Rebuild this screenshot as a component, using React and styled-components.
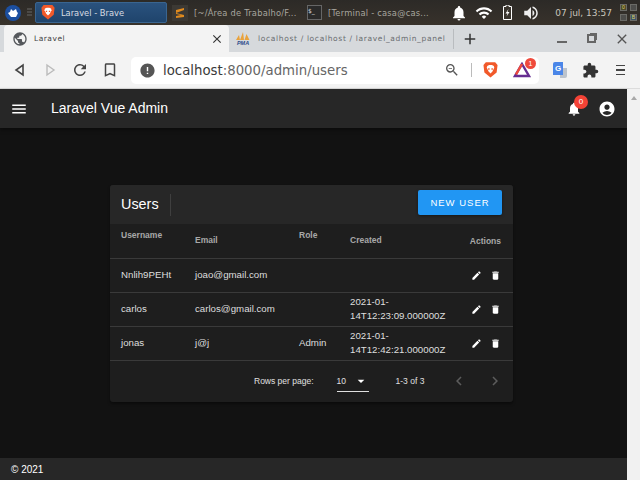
import React from 'react'
import styled, { createGlobalStyle } from 'styled-components'
import { MdMenu, MdNotifications, MdAccountCircle, MdEdit, MdDelete, MdChevronLeft, MdChevronRight, MdArrowDropDown, MdPublic, MdError, MdExtension, MdClose, MdAdd, MdBookmarkBorder, MdRefresh, MdWifi, MdVolumeUp, MdZoomOut } from 'react-icons/md'

const GlobalStyle = createGlobalStyle`
  html, body { margin: 0; padding: 0; height: 480px; overflow: hidden; background: #121212; }
  * { box-sizing: border-box; }
  body { font-family: "Liberation Sans", Arial, sans-serif; }
`

const users = [
  { name: 'Nnlih9PEHt', email: 'joao@gmail.com', role: '', created: '' },
  { name: 'carlos', email: 'carlos@gmail.com', role: '', created: '2021-01-14T12:23:09.000000Z' },
  { name: 'jonas', email: 'j@j', role: 'Admin', created: '2021-01-14T12:42:21.000000Z' },
]

const Lion = ({ size = 16 }) => (
  <svg width={size} height={size * 1.15} viewBox="0 0 16 18">
    <path d="M3 1h10l2.5 3-1 8-6.5 5.500-6.500-5.500-1-8z" fill="#f1592a" />
    <path d="M4.500 5l2-1h3l2 1 .5 2-2 4-2 2-2-2-2-4z" fill="#fff" />
    <path d="M5.500 7.500h1.500v1.500H5.500zM9 7.500h1.500v1.500H9z" fill="#f1592a" />
  </svg>
)

const App = () => {
  return (
    <Screen>
      <GlobalStyle />
      <Taskbar>
        <StartButton>
          <svg width="12" height="10" viewBox="0 0 12 10"><path d="M1 5l2-1 1-3 2 2 3-2 1 3 1 1-2 4H4z" fill="#fff" /></svg>
        </StartButton>
        <Grip />
        <WindowButton $active>
          <Lion size={14} />
          <span>Laravel - Brave</span>
        </WindowButton>
        <WindowButton>
          <SublimeIcon>
            <svg width="10" height="12" viewBox="0 0 10 12"><path d="M1 3l8-2v2L1 6zM1 6l8 2v2l-8 1V9l5-1-5-1z" fill="#e08a1e" /></svg>
          </SublimeIcon>
          <span>[~/Área de Trabalho/F...</span>
        </WindowButton>
        <WindowButton>
          <TerminalIcon>$_</TerminalIcon>
          <span>[Terminal - casa@cas...</span>
        </WindowButton>
        <Tray>
          <MdNotifications size={18} color="#fff" />
          <MdWifi size={18} color="#fff" />
          <BatterySlot>
            <svg width="9" height="15" viewBox="0 0 9 15">
              <path d="M3 0h3v1.500h2.500v13H.5v-13H3z" fill="#3a352e" stroke="#fff" />
              <path d="M5.500 4L2.500 8.500h2l-1 3 3-4.500h-2z" fill="#fff" />
            </svg>
          </BatterySlot>
          <MdVolumeUp size={18} color="#eee" />
          <Clock>07 jul, 13:57</Clock>
          <Pager>
            <PagerCell $color="#4a4a2a"><em>0</em></PagerCell>
            <PagerCell />
            <PagerCell />
            <PagerCell $color="#3a5468"><em>B</em></PagerCell>
          </Pager>
        </Tray>
      </Taskbar>

      <TabStrip>
        <ActiveTab>
          <MdPublic size={16} color="#55585c" />
          <TabTitle>Laravel</TabTitle>
          <MdClose size={14} color="#333" />
        </ActiveTab>
        <OtherTab>
          <PmaIcon>
            <svg width="16" height="8" viewBox="0 0 16 8">
              <path d="M1 8l3-5 1 5zM5 8l3-8 1 8zM9.500 8l2-6 3 6z" fill="#e9a23b" />
            </svg>
            <PmaLabel>PMA</PmaLabel>
          </PmaIcon>
          <TabTitleMuted>localhost / localhost / laravel_admin_panel</TabTitleMuted>
        </OtherTab>
        <TabDivider />
        <MdAdd size={18} color="#333" />
        <WindowControls>
          <MinimizeMark />
          <RestoreMark />
          <MdClose size={16} color="#555" />
        </WindowControls>
      </TabStrip>

      <Toolbar>
        <NavButton>
          <svg width="16" height="16" viewBox="0 0 16 16"><path d="M11 3v10L4 8z" fill="none" stroke="#444" strokeWidth="1.6" /></svg>
        </NavButton>
        <NavButton>
          <svg width="16" height="16" viewBox="0 0 16 16"><path d="M5 3v10l7-5z" fill="none" stroke="#bbb" strokeWidth="1.4" /></svg>
        </NavButton>
        <NavButton>
          <MdRefresh size={18} color="#444" />
        </NavButton>
        <NavButton>
          <MdBookmarkBorder size={18} color="#444" />
        </NavButton>
        <AddressBar>
          <MdError size={17} color="#555" />
          <Url>localhost<small>:8000/admin/users</small></Url>
          <AddressTools>
            <MdZoomOut size={16} color="#555" />
            <AddressDivider />
            <Lion size={15} />
            <BatWrap>
              <svg width="18" height="16" viewBox="0 0 18 16">
                <path d="M9 2l7 12H2z" fill="none" stroke="#662d91" strokeWidth="2.400" />
                <path d="M9 2L3 12.500" stroke="#ef4a3c" strokeWidth="2.400" />
              </svg>
              <BatBadge>1</BatBadge>
            </BatWrap>
          </AddressTools>
        </AddressBar>
        <ExtensionIcons>
          <TranslateIcon>G</TranslateIcon>
          <MdExtension size={17} color="#333" />
          <MenuMark><i /><i /><i /></MenuMark>
        </ExtensionIcons>
      </Toolbar>

      <PageArea>
        <Page>
          <AppBar>
            <MdMenu size={18} color="#fff" />
            <AppTitle>Laravel Vue Admin</AppTitle>
            <AppBarIcons>
              <BellWrap>
                <MdNotifications size={16} color="#fff" />
                <BellBadge>0</BellBadge>
              </BellWrap>
              <MdAccountCircle size={18} color="#fff" />
            </AppBarIcons>
          </AppBar>

          <Main>
            <Card>
              <CardHead>
                <CardTitle>Users</CardTitle>
                <VDivider />
                <NewUserButton>NEW USER</NewUserButton>
              </CardHead>
              <Table>
                <colgroup>
                  <col width="74" />
                  <col width="104" />
                  <col width="51" />
                  <col width="120" />
                  <col width="54" />
                </colgroup>
                <thead>
                  <tr>
                    <HeadCell $align="top">Username</HeadCell>
                    <HeadCell>Email</HeadCell>
                    <HeadCell $align="top">Role</HeadCell>
                    <HeadCell>Created</HeadCell>
                    <ActionsHead>Actions</ActionsHead>
                  </tr>
                </thead>
                <tbody>
                  {users.map((u) => (
                    <tr key={u.name}>
                      <Cell>{u.name}</Cell>
                      <Cell>{u.email}</Cell>
                      <Cell>{u.role}</Cell>
                      <Cell>{u.created}</Cell>
                      <Cell>
                        <RowActions>
                          <MdEdit size={11} color="#fff" />
                          <MdDelete size={11} color="#fff" />
                        </RowActions>
                      </Cell>
                    </tr>
                  ))}
                </tbody>
              </Table>
              <Pagination>
                <span>Rows per page:</span>
                <PerPage>
                  10
                  <MdArrowDropDown size={16} color="#fff" />
                </PerPage>
                <PageRange>1-3 of 3</PageRange>
                <PagerArrows>
                  <MdChevronLeft size={18} color="#5c5c5c" />
                  <MdChevronRight size={18} color="#5c5c5c" />
                </PagerArrows>
              </Pagination>
            </Card>
          </Main>

          <PageFooter>© 2021</PageFooter>
        </Page>
        <Scrollbar>
          <ScrollUp />
        </Scrollbar>
      </PageArea>
    </Screen>
  )
}

export default App

const Screen = styled.div`
  width: 640px;
  height: 480px;
  display: flex;
  flex-direction: column;
  overflow: hidden;
`

const Taskbar = styled.div`
  height: 25px;
  flex: none;
  display: flex;
  align-items: center;
  gap: 5px;
  padding-left: 5px;
  background: linear-gradient(#2c2a27, #38322b);
`

const StartButton = styled.div`
  width: 16px;
  height: 16px;
  border-radius: 50%;
  background: #1c4fa0;
  display: flex;
  align-items: center;
  justify-content: center;
`

const Grip = styled.div`
  width: 5px;
  height: 9px;
  margin: 0 -2px 0 1px;
  background: repeating-linear-gradient(#4c4a47 0 2px, transparent 2px 3px);
`

const WindowButton = styled.div`
  width: 132px;
  height: 21px;
  display: flex;
  align-items: center;
  gap: 6px;
  padding-left: 5px;
  font-family: "DejaVu Sans", sans-serif;
  font-size: 8.3px;
  letter-spacing: ${({ $active }) => ($active ? '0' : '0.22px')};
  color: ${({ $active }) => ($active ? '#d8dde2' : '#a8a69f')};
  white-space: nowrap;
  overflow: hidden;
  border-radius: 2px;
  background: ${({ $active }) => ($active ? 'linear-gradient(#2a527e, #1f446c)' : 'transparent')};
  border: 1px solid ${({ $active }) => ($active ? '#3a6590' : 'transparent')};
  margin-right: ${({ $active }) => ($active ? '-6px' : '-2px')};
`

const SublimeIcon = styled.div`
  width: 16px;
  height: 16px;
  background: #3c3934;
  display: flex;
  align-items: center;
  justify-content: center;
  flex: none;
`

const TerminalIcon = styled.div`
  width: 15px;
  height: 15px;
  flex: none;
  background: #2a2a2a;
  border: 1px solid #666;
  color: #ddd;
  font-size: 6px;
  line-height: 10px;
  letter-spacing: 0;
`

const Tray = styled.div`
  margin-left: auto;
  display: flex;
  align-items: center;
  gap: 7px;
  padding-right: 3px;
`

const BatterySlot = styled.div`
  display: flex;
  margin: 0 3px;
`

const Clock = styled.div`
  font-family: "DejaVu Sans", sans-serif;
  font-size: 9px;
  color: #c9c6bd;
  margin-left: 8px;
  white-space: nowrap;
`

const Pager = styled.div`
  display: grid;
  grid-template-columns: 7px 7px;
  gap: 3px;
  margin-left: 1px;
`

const PagerCell = styled.div`
  width: 7px;
  height: 7px;
  background: ${({ $color }) => $color || '#4d4d4b'};
  border: 1px solid #6a6a66;
  font-size: 5px;
  line-height: 5px;
  color: #e0d060;
  text-align: center;
  em { font-style: normal; }
`

const TabStrip = styled.div`
  height: 27px;
  flex: none;
  display: flex;
  align-items: center;
  padding: 0 10px 0 4px;
  background: #d6d9dc;
  color: #333;
`

const ActiveTab = styled.div`
  align-self: flex-end;
  width: 225px;
  height: 27px;
  background: #f3f3f3;
  border-radius: 4px 4px 0 0;
  display: flex;
  align-items: center;
  padding: 0 5px 0 8px;
`

const TabTitle = styled.div`
  flex: 1;
  margin-left: 6px;
  font-family: "DejaVu Sans", sans-serif;
  font-size: 7.5px;
  letter-spacing: 0.5px;
  color: #444;
`

const OtherTab = styled.div`
  width: 224px;
  display: flex;
  align-items: center;
  gap: 7px;
  padding-left: 6px;
  overflow: hidden;
`

const PmaIcon = styled.div`
  width: 16px;
  flex: none;
  display: flex;
  flex-direction: column;
  align-items: center;
`

const PmaLabel = styled.div`
  font-size: 5.5px;
  line-height: 6px;
  font-weight: bold;
  font-style: italic;
  color: #2c4a8a;
`

const TabTitleMuted = styled.div`
  font-family: "DejaVu Sans", sans-serif;
  font-size: 7.5px;
  letter-spacing: 0.66px;
  color: #6a6d70;
  white-space: nowrap;
  overflow: hidden;
`

const TabDivider = styled.div`
  width: 1px;
  height: 20px;
  background: #b9bcbf;
  margin-right: 7px;
`

const WindowControls = styled.div`
  margin-left: auto;
  display: flex;
  align-items: center;
  gap: 18px;
`

const MinimizeMark = styled.div`
  width: 10px;
  height: 2px;
  background: #666;
  margin: 6px 2px 0 0;
`

const RestoreMark = styled.div`
  width: 9px;
  height: 9px;
  border: 2px solid #666;
  box-shadow: 2px -2px 0 -1px #666;
`

const Toolbar = styled.div`
  height: 36px;
  flex: none;
  display: flex;
  align-items: center;
  padding: 0 0 0 5px;
  background: #f3f3f3;
`

const NavButton = styled.div`
  width: 30px;
  flex: none;
  display: flex;
  justify-content: center;
`

const AddressBar = styled.div`
  width: 408px;
  height: 27px;
  flex: none;
  margin-left: 6px;
  background: #fff;
  border-radius: 5px;
  display: flex;
  align-items: center;
  padding: 0 8px;
  gap: 7px;
`

const Url = styled.div`
  font-family: "DejaVu Sans", sans-serif;
  font-size: 13.3px;
  color: #3a3a3a;
  small { font-size: 13.3px; color: #666; }
`

const AddressTools = styled.div`
  margin-left: auto;
  display: flex;
  align-items: center;
  gap: 11px;
`

const AddressDivider = styled.div`
  width: 1px;
  height: 14px;
  background: #bbb;
`

const BatWrap = styled.div`
  position: relative;
  display: flex;
  margin-left: 4px;
`

const BatBadge = styled.div`
  position: absolute;
  top: -4px;
  right: -5px;
  width: 11px;
  height: 11px;
  border-radius: 50%;
  background: #ef4a3c;
  color: #fff;
  font-size: 7px;
  line-height: 11px;
  text-align: center;
`

const ExtensionIcons = styled.div`
  display: flex;
  align-items: center;
  gap: 15px;
  margin-left: 14px;
`

const TranslateIcon = styled.div`
  width: 14px;
  height: 16px;
  border-radius: 2px;
  background: linear-gradient(#4a86e8, #4a86e8) left top / 10px 13px no-repeat, linear-gradient(#bcc3cc, #bcc3cc) right bottom / 7px 10px no-repeat;
  color: #fff;
  font-size: 8px;
  font-weight: bold;
  line-height: 13px;
  padding-left: 2px;
`

const MenuMark = styled.div`
  width: 9px;
  margin-left: 2px;
  display: flex;
  flex-direction: column;
  gap: 3px;
  i { display: block; height: 1.5px; background: #444; }
`

const PageArea = styled.div`
  flex: 1;
  min-height: 0;
  display: flex;
  border-top: 1px solid #dcdcdc;
`

const Page = styled.div`
  flex: 1;
  min-width: 0;
  display: flex;
  flex-direction: column;
  background: #121212;
`

const Scrollbar = styled.div`
  width: 13px;
  background: #f1f1f1;
  padding: 7px 0 0 4px;
`

const ScrollUp = styled.div`
  width: 0;
  height: 0;
  border-left: 3.5px solid transparent;
  border-right: 3.5px solid transparent;
  border-bottom: 4px solid #a8a8a8;
`

const AppBar = styled.header`
  height: 39px;
  flex: none;
  display: flex;
  align-items: center;
  padding: 0 11px 0 10px;
  background: #272727;
  box-shadow: 0 2px 4px rgba(0, 0, 0, 0.4);
`

const AppTitle = styled.div`
  margin-left: 23px;
  padding-bottom: 1px;
  font-size: 14px;
  color: #fff;
`

const AppBarIcons = styled.div`
  margin-left: auto;
  display: flex;
  align-items: center;
  gap: 16px;
`

const BellWrap = styled.div`
  position: relative;
  display: flex;
`

const BellBadge = styled.div`
  position: absolute;
  top: -6px;
  right: -6px;
  width: 14px;
  height: 14px;
  border-radius: 50%;
  background: #f44336;
  color: #fff;
  font-size: 8px;
  line-height: 14px;
  text-align: center;
`

const Main = styled.main`
  flex: 1;
  min-height: 0;
  padding: 57px 114px 0 110px;
`

const Card = styled.section`
  width: 403px;
  background: #1e1e1e;
  border-radius: 3px;
  box-shadow: 0 2px 3px rgba(0, 0, 0, 0.4);
  overflow: hidden;
`

const CardHead = styled.div`
  height: 39px;
  display: flex;
  align-items: center;
  padding: 0 11px;
  background: #272727;
`

const CardTitle = styled.div`
  font-size: 14.4px;
  padding-bottom: 2px;
  color: #fff;
`

const VDivider = styled.div`
  width: 1px;
  height: 22px;
  margin-left: 11px;
  background: #3f3f3f;
`

const NewUserButton = styled.button`
  margin-left: auto;
  margin-top: -4px;
  width: 84px;
  height: 25px;
  border: none;
  border-radius: 2px;
  background: #2196f3;
  color: #fff;
  font-family: "Liberation Sans", sans-serif;
  font-size: 9.5px;
  letter-spacing: 1px;
  padding: 0;
  box-shadow: 0 1px 3px rgba(0, 0, 0, 0.4);
`

const Table = styled.table`
  width: 403px;
  table-layout: fixed;
  border-collapse: collapse;
`

const HeadCell = styled.th`
  height: 34px;
  padding: ${({ $align }) => ($align === 'top' ? '6px 0 0 11px' : '11px 0 0 11px')};
  vertical-align: top;
  text-align: left;
  font-size: 8.5px;
  font-weight: bold;
  color: #a8a8a8;
  border-bottom: 1px solid #3a3a3a;
`

const ActionsHead = styled(HeadCell)`
  padding: 12px 12px 0 0;
  text-align: right;
`

const Cell = styled.td`
  height: 34px;
  padding: 0 0 0 11px;
  font-size: 9.7px;
  line-height: 14px;
  color: #dedede;
  border-bottom: 1px solid #3a3a3a;
`

const RowActions = styled.div`
  display: flex;
  gap: 8px;
  margin-left: 1px;
`

const Pagination = styled.div`
  height: 41px;
  display: flex;
  align-items: center;
  padding-left: 144px;
  font-size: 8.5px;
  color: #e0e0e0;
`

const PerPage = styled.div`
  width: 32px;
  height: 22px;
  margin-left: 23px;
  display: flex;
  align-items: center;
  justify-content: space-between;
  border-bottom: 1px solid #e0e0e0;
`

const PageRange = styled.div`
  margin-left: 27px;
`

const PagerArrows = styled.div`
  display: flex;
  gap: 18px;
  margin-left: 26px;
  align-items: center;
`

const PageFooter = styled.footer`
  height: 22px;
  flex: none;
  display: flex;
  align-items: center;
  padding-left: 11px;
  background: #272727;
  color: #fff;
  font-size: 10px;
`
